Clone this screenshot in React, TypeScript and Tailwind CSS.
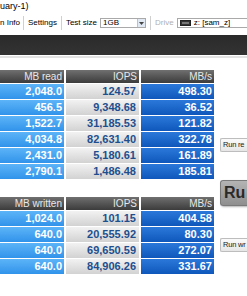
import React from "react";

const read = [
  ["2,048.0", "124.57", "498.30"],
  ["456.5", "9,348.68", "36.52"],
  ["1,522.7", "31,185.53", "121.82"],
  ["4,034.8", "82,631.40", "322.78"],
  ["2,431.0", "5,180.61", "161.89"],
  ["2,790.1", "1,486.48", "185.81"],
];
const write = [
  ["1,024.0", "101.15", "404.58"],
  ["640.0", "20,555.92", "80.30"],
  ["640.0", "69,650.59", "272.07"],
  ["640.0", "84,906.26", "331.67"],
];

function Table({ first, rows }: { first: string; rows: string[][] }) {
  const head =
    "h-[13px] flex items-center justify-end pr-[2px] text-[10px] text-[#e8e8e8] bg-gradient-to-b from-[#707070] to-[#3c3c3c] leading-none";
  return (
    <div className="grid grid-cols-[64px_73px_73px] gap-x-[2px] gap-y-px">
      <div className={head}>{first}</div>
      <div className={head}>IOPS</div>
      <div className={head}>MB/s</div>
      {rows.map((r, i) => (
        <React.Fragment key={i}>
          <div className="h-[15px] flex items-center justify-end pr-[2px] text-[11px] font-bold text-white bg-gradient-to-b from-[#5cb4f8] to-[#3093ea] leading-none">
            {r[0]}
          </div>
          <div className="h-[15px] flex items-center justify-end pr-[3px] text-[11px] font-bold text-[#1d4f8f] bg-gradient-to-b from-[#f2f2f2] to-[#d2d2d2] leading-none">
            {r[1]}
          </div>
          <div className="h-[15px] flex items-center justify-end pr-[2px] text-[11px] font-bold text-white bg-gradient-to-b from-[#2a78da] to-[#0f57bb] leading-none">
            {r[2]}
          </div>
        </React.Fragment>
      ))}
    </div>
  );
}

export default function App() {
  return (
    <div className="w-[247px] h-[296px] overflow-hidden bg-white font-['Liberation_Sans',Arial,sans-serif] text-black">
      <div className="h-[13px] flex items-center text-[9px] leading-none whitespace-nowrap">
        <span>uary-1)</span>
      </div>
      <div className="h-[20px] flex items-center text-[8px] leading-none whitespace-nowrap">
        <span>n Info</span>
        <div className="w-px h-[14px] bg-[#d0d0d0] mx-[3px]" />
        <span className="ml-[1px]">Settings</span>
        <div className="w-px h-[14px] bg-[#d0d0d0] mx-[4px]" />
        <span>Test size</span>
        <div className="ml-[3px] w-[46px] h-[10px] border border-[#a9a9a9] bg-white flex items-center">
          <span className="ml-[2px] flex-1">1GB</span>
          <div className="w-[8px] h-full bg-[#dfe8f3] border-l border-[#b5c3d4] flex items-center justify-center">
            <svg width="5" height="3" viewBox="0 0 5 3">
              <path d="M0 0 L5 0 L2.5 3 Z" fill="#444" />
            </svg>
          </div>
        </div>
        <div className="w-px h-[14px] bg-[#d0d0d0] mx-[4px]" />
        <span className="text-[#b0b0b0]">Drive</span>
        <div className="ml-[3px] flex-1 h-[10px] border border-r-0 border-[#a9a9a9] bg-white flex items-center">
          <div className="ml-[2px] w-[11px] h-[6px] bg-[#333] border border-[#222] flex items-center justify-center">
            <div className="w-[7px] h-[2px] bg-[#777]" />
          </div>
          <span className="ml-[3px]">z: [sam_z]</span>
        </div>
      </div>
      <div className="mt-[2px] h-[20px] bg-gradient-to-b from-[#2a2a2a] to-[#333333]" />
      <div className="mt-[1px] h-[2px] bg-[#e2e2e2]" />
      <div className="mt-[12px] flex">
        <div className="flex flex-col gap-[18px]">
          <Table first="MB read" rows={read} />
          <Table first="MB written" rows={write} />
        </div>
        <div className="ml-[6px] flex-1 flex flex-col whitespace-nowrap">
          <div className="mt-[68px] h-[14px] border border-r-0 border-[#bdbdbd] rounded-l-[2px] bg-gradient-to-b from-[#fafafa] to-[#e6e6e6] flex items-center pl-[2px] text-[7.5px] tracking-[-0.2px] leading-none text-[#222]">
            Run re
          </div>
          <div className="mt-[28px] h-[26px] border border-r-0 border-[#7a7a7a] rounded-l-[3px] bg-gradient-to-b from-[#b4b4b4] to-[#8f8f8f] flex items-center pl-[3px] text-[16px] font-bold leading-none text-[#2a2a2a] shadow-[1px_1px_2px_rgba(0,0,0,0.3)]">
            Ru
          </div>
          <div className="mt-[32px] h-[14px] border border-r-0 border-[#bdbdbd] rounded-l-[2px] bg-gradient-to-b from-[#fafafa] to-[#e6e6e6] flex items-center pl-[2px] text-[7.5px] tracking-[-0.2px] leading-none text-[#222]">
            Run wr
          </div>
        </div>
      </div>
    </div>
  );
}
